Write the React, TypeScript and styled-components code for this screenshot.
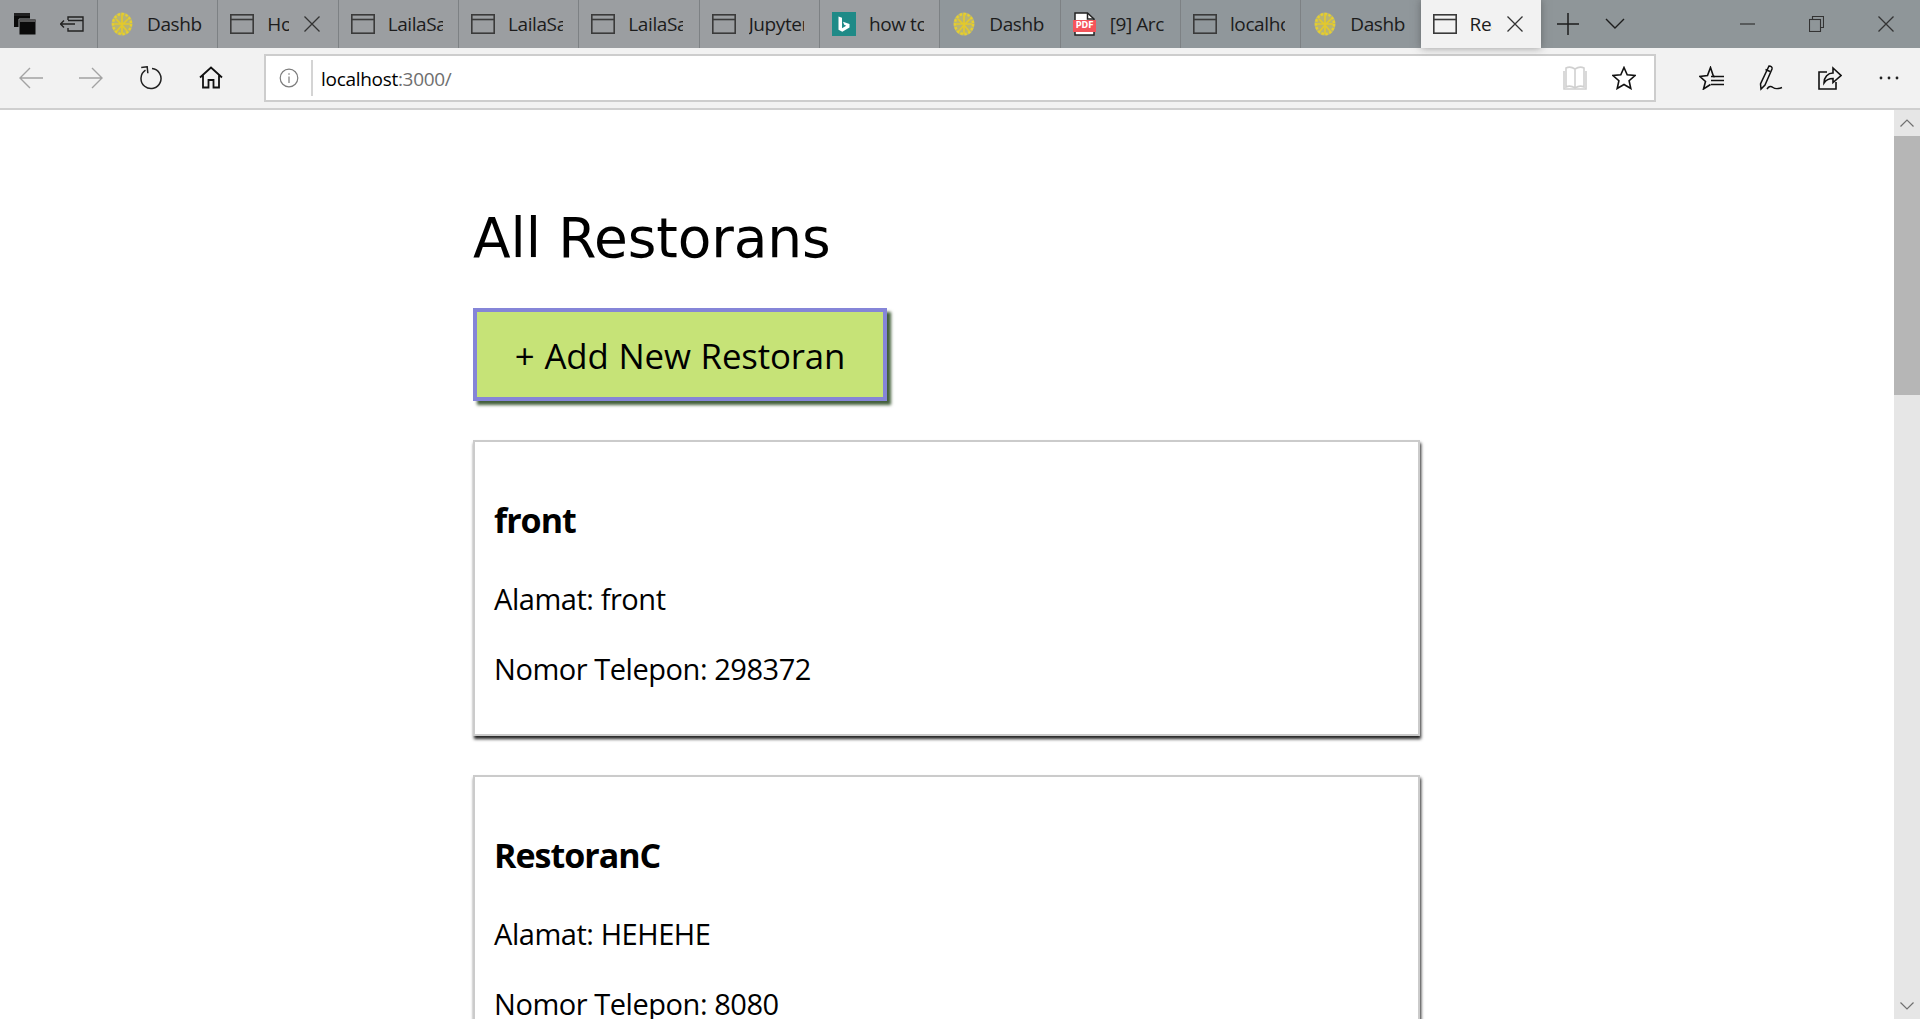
import React from 'react';
import styled, { createGlobalStyle } from 'styled-components';

const GlobalStyle = createGlobalStyle`
  html, body {
    margin: 0;
    padding: 0;
    height: 100%;
    overflow: hidden;
    background: #fff;
    font-family: 'Open Sans', 'Noto Sans', sans-serif;
    color: #000;
  }
  * { box-sizing: border-box; }
`;

type TabIcon = 'page' | 'brain' | 'bing' | 'pdf';
type TabInfo = { title: string; icon: TabIcon; closable?: boolean; active?: boolean; cool?: boolean };

const tabs: TabInfo[] = [
  { title: 'Dashboard', icon: 'brain' },
  { title: 'Home', icon: 'page', closable: true },
  { title: 'LailaSalsabila', icon: 'page' },
  { title: 'LailaSalsabila', icon: 'page' },
  { title: 'LailaSalsabila', icon: 'page' },
  { title: 'Jupyter', icon: 'page' },
  { title: 'how to', icon: 'bing' },
  { title: 'Dashb', icon: 'brain', cool: true },
  { title: '[9] Arc', icon: 'pdf', cool: true },
  { title: 'localhost', icon: 'page', cool: true },
  { title: 'Dashboard', icon: 'brain', cool: true },
  { title: 'React', icon: 'page', closable: true, active: true },
];

const restorans = [
  { name: 'front', alamat: 'front', telepon: '298372' },
  { name: 'RestoranC', alamat: 'HEHEHE', telepon: '8080' },
];

const Shell = styled.div`
  width: 1920px;
  height: 1019px;
  display: flex;
  flex-direction: column;
  overflow: hidden;
`;

const TabStrip = styled.div`
  height: 48px;
  flex: none;
  display: flex;
  background: #8f9699;
`;

const StripTools = styled.div`
  width: 97px;
  flex: none;
  display: flex;
  align-items: center;
  padding-left: 14px;
  gap: 24px;
  background: #999c9f;
`;

const Tab = styled.div<{ $active?: boolean; $cool?: boolean }>`
  flex: 0 0 120.33px;
  height: 48px;
  display: flex;
  align-items: center;
  padding-left: 12px;
  background: ${p => (p.$active ? '#f2f2f2' : p.$cool ? '#90979b' : '#9b9ea1')};
  border-left: ${p => (p.$active ? 'none' : '1px solid #7d8184')};
  box-shadow: ${p => (p.$active ? '0 0 8px rgba(60, 60, 60, 0.5)' : 'none')};
  position: relative;
`;

const TabGlyph = styled.span`
  flex: none;
  width: 24px;
  height: 30px;
  display: flex;
  align-items: center;
  justify-content: center;
`;

const TabTitle = styled.span<{ $closable?: boolean }>`
  margin-left: 13px;
  width: ${p => (p.$closable ? '22px' : '55px')};
  overflow: hidden;
  white-space: nowrap;
  font-size: 19px;
  letter-spacing: -0.4px;
  color: #1c1c1c;
`;

const TabClose = styled.span`
  margin-left: 15px;
  display: flex;
`;

const StripButton = styled.div<{ $width: number }>`
  flex: none;
  width: ${p => p.$width}px;
  height: 48px;
  display: flex;
  align-items: center;
  justify-content: center;
`;

const WindowButtons = styled.div`
  margin-left: auto;
  display: flex;
`;

const Toolbar = styled.div`
  height: 62px;
  flex: none;
  display: flex;
  align-items: center;
  background: #f2f2f2;
  border-bottom: 2px solid #cfcfcf;
  padding: 0 2px 0 1px;
`;

const ToolButton = styled.div`
  flex: none;
  width: 60px;
  height: 48px;
  display: flex;
  align-items: center;
  justify-content: center;
`;

const ActionButton = styled(ToolButton)`
  width: 59px;
`;

const AddressBar = styled.div`
  width: 1393px;
  height: 48px;
  margin: 0 26px 0 23px;
  display: flex;
  align-items: center;
  background: #fff;
  border: 2px solid #cdcdcd;
`;

const InfoSlot = styled.div`
  width: 47px;
  height: 36px;
  flex: none;
  display: flex;
  align-items: center;
  justify-content: center;
  border-right: 2px solid #d4d4d4;
`;

const Url = styled.div`
  margin-left: 8px;
  padding-top: 1px;
  font-size: 19px;
  letter-spacing: -0.3px;
  color: #000;
`;

const UrlRest = styled.span`
  color: #6f6f6f;
`;

const AddressActions = styled.div`
  margin-left: auto;
  display: flex;
  padding-right: 6px;
`;

const AddressAction = styled.div`
  width: 49px;
  height: 44px;
  display: flex;
  align-items: center;
  justify-content: center;
`;

const Viewport = styled.div`
  flex: 1;
  display: flex;
  min-height: 0;
`;

const PageArea = styled.main`
  flex: 1;
  overflow: hidden;
  padding: 94px 0 0 473px;
`;

const Column = styled.div`
  width: 947px;
`;

const Heading = styled.h1`
  margin: 0 0 36px;
  height: 68px;
  font-family: 'DejaVu Sans', sans-serif;
  font-size: 55px;
  font-weight: 400;
  line-height: 68px;
  letter-spacing: -0.1px;
`;

const AddButton = styled.button`
  display: block;
  width: 414px;
  height: 93px;
  margin: 0 0 39px;
  padding: 2px 0 0;
  background: #c6e377;
  border: 4px solid #8585d8;
  box-shadow: 4px 4px 3px #44603c;
  font-family: 'Open Sans', sans-serif;
  font-size: 34.8px;
  letter-spacing: -0.15px;
  word-spacing: 1px;
  color: #000;
`;

const Card = styled.article`
  height: 296px;
  margin-bottom: 39px;
  padding: 58px 20px 0 19px;
  background: #fff;
  border: 2px solid #cbcbcb;
  box-shadow: 1px 3px 3px #222;
`;

const CardName = styled.h3`
  margin: 0 0 39px;
  font-family: 'Open Sans', sans-serif;
  font-size: 34px;
  font-weight: 700;
  line-height: 40px;
  letter-spacing: -1px;
`;

const CardLine = styled.p`
  margin: 0 0 30px;
  font-family: 'Open Sans', sans-serif;
  font-size: 29px;
  line-height: 40px;
  letter-spacing: -0.45px;
`;

const Scrollbar = styled.div`
  width: 26px;
  flex: none;
  display: flex;
  flex-direction: column;
  background: #e6e6e6;
`;

const ScrollArrow = styled.div`
  height: 26px;
  flex: none;
  display: flex;
  align-items: center;
  justify-content: center;
`;

const ScrollThumb = styled.div`
  height: 259px;
  flex: none;
  background: #b6b6b6;
`;

const ScrollTrack = styled.div`
  flex: 1;
`;

const PdfGlyph = styled.span`
  position: relative;
  display: block;
  width: 23px;
  height: 24px;
`;

const PdfLabel = styled.span`
  position: absolute;
  left: 0;
  top: 8px;
  width: 23px;
  height: 12px;
  background: #f4545a;
  color: #fff;
  font-family: 'DejaVu Sans', sans-serif;
  font-size: 8px;
  font-weight: 700;
  line-height: 12px;
  text-align: center;
`;

const PageIcon = () => (
  <svg width="24" height="24" viewBox="0 0 24 24" fill="none" stroke="#3a3a3a" strokeWidth="1.6">
    <rect x="0.8" y="2.8" width="22.4" height="18.4" />
    <path d="M1 7.5h22" />
  </svg>
);

const BrainIcon = () => (
  <svg width="22" height="24" viewBox="0 0 22 24" fill="none">
    <ellipse cx="11" cy="12" rx="10.5" ry="11.5" fill="#b9b472" />
    <ellipse cx="11" cy="12" rx="9" ry="10" stroke="#e6cf2e" strokeWidth="2.4" strokeDasharray="2.5 1.5" />
    <path d="M11 2v20M5 7l6 6 6-6M6 19l5-6 5 6M3 12h16" stroke="#e3c92c" strokeWidth="1.7" />
  </svg>
);

const BingIcon = () => (
  <svg width="24" height="24" viewBox="0 0 24 24">
    <rect width="24" height="24" fill="#1f8a87" />
    <path d="M6.5 4.5l3.5 1.2v10.5l4.2-2.4-2-1-1.2-3 6.5 2.3v3.4l-7.2 4.3-3.8-2z" fill="#fff" />
  </svg>
);

const PdfIcon = () => (
  <PdfGlyph>
    <svg width="23" height="24" viewBox="0 0 23 24" fill="#fff" stroke="#222" strokeWidth="1.5">
      <path d="M2 1h12.5L21 7v16H2z" />
      <path d="M14.5 1v6H21" fill="none" />
    </svg>
    <PdfLabel>PDF</PdfLabel>
  </PdfGlyph>
);

const CloseIcon = () => (
  <svg width="16" height="16" viewBox="0 0 16 16" stroke="#333" strokeWidth="1.3" fill="none">
    <path d="M0.5 0.5l15 15M15.5 0.5l-15 15" />
  </svg>
);

const tabGlyph = (icon: TabIcon) => {
  if (icon === 'brain') return <BrainIcon />;
  if (icon === 'bing') return <BingIcon />;
  if (icon === 'pdf') return <PdfIcon />;
  return <PageIcon />;
};

const Arrow = ({ flip }: { flip?: boolean }) => (
  <svg width="24" height="24" viewBox="0 0 24 24" fill="none" stroke="#a3a3a3" strokeWidth="1.4">
    {flip ? <path d="M0 12h23M13 2l10 10-10 10" /> : <path d="M24 12H1M11 2L1 12l10 10" />}
  </svg>
);

export default function App() {
  return (
    <Shell>
      <GlobalStyle />
      <TabStrip>
        <StripTools>
          <svg width="22" height="22" viewBox="0 0 22 22" fill="#0a0a0a">
            <path d="M0 0h16v3H0z" opacity="0.85" />
            <path d="M0 3h16v11H0z" />
            <path d="M5 6h17v16H5z" stroke="#999c9f" strokeWidth="1" />
            <path d="M5.5 6.5h16v2.5h-16z" fill="#555" />
          </svg>
          <svg width="24" height="16" viewBox="0 0 24 16" fill="none" stroke="#222" strokeWidth="1.4">
            <path d="M8 4V1h15v14H8v-3M8 4.5h15" />
            <path d="M0.5 8H15M4 4.5L0.5 8 4 11.5" />
          </svg>
        </StripTools>
        {tabs.map((tab, i) => (
          <Tab key={i} $active={tab.active} $cool={tab.cool}>
            <TabGlyph>{tabGlyph(tab.icon)}</TabGlyph>
            <TabTitle $closable={tab.closable}>{tab.title}</TabTitle>
            {tab.closable && (
              <TabClose>
                <CloseIcon />
              </TabClose>
            )}
          </Tab>
        ))}
        <StripButton $width={54}>
          <svg width="22" height="22" viewBox="0 0 22 22" stroke="#1d1d1d" strokeWidth="1.5">
            <path d="M11 0v22M0 11h22" />
          </svg>
        </StripButton>
        <StripButton $width={40}>
          <svg width="20" height="12" viewBox="0 0 20 12" fill="none" stroke="#1d1d1d" strokeWidth="1.4">
            <path d="M1 1l9 9 9-9" />
          </svg>
        </StripButton>
        <WindowButtons>
          <StripButton $width={69}>
            <svg width="15" height="2" viewBox="0 0 15 2" stroke="#333" strokeWidth="1.2">
              <path d="M0 1h15" />
            </svg>
          </StripButton>
          <StripButton $width={69}>
            <svg width="15" height="16" viewBox="0 0 15 16" fill="none" stroke="#333" strokeWidth="1.1">
              <rect x="0.5" y="3.5" width="11" height="12" />
              <path d="M3.5 3.5v-3h11v11h-3" />
            </svg>
          </StripButton>
          <StripButton $width={69}>
            <CloseIcon />
          </StripButton>
        </WindowButtons>
      </TabStrip>

      <Toolbar>
        <ToolButton>
          <Arrow />
        </ToolButton>
        <ToolButton>
          <Arrow flip />
        </ToolButton>
        <ToolButton>
          <svg width="24" height="24" viewBox="0 0 24 24" fill="none" stroke="#222" strokeWidth="1.5">
            <path d="M6.5 4.2A10 10 0 1 0 13 2.6" />
            <path d="M2.5 1h6v6.5" transform="rotate(-6 6 4)" />
          </svg>
        </ToolButton>
        <ToolButton>
          <svg width="24" height="24" viewBox="0 0 24 24" fill="none" stroke="#111" strokeWidth="1.8">
            <path d="M1 11.5L12 1.5l11 10M4 9.5V21.5h5.5V14h5v7.5H20V9.5" />
          </svg>
        </ToolButton>
        <AddressBar>
          <InfoSlot>
            <svg width="20" height="20" viewBox="0 0 20 20" fill="none" stroke="#7c7c7c" strokeWidth="1.2">
              <circle cx="10" cy="10" r="8.8" />
              <path d="M10 8.5V15M10 5.2v1.6" />
            </svg>
          </InfoSlot>
          <Url>
            localhost<UrlRest>:3000/</UrlRest>
          </Url>
          <AddressActions>
            <AddressAction>
              <svg width="24" height="26" viewBox="0 0 24 26" fill="none" stroke="#d0d0d0" strokeWidth="1.6">
                <path d="M12 4C9 2 5 2 3 3v19c2-1 6-1 9 1 3-2 7-2 9-1V3c-2-1-6-1-9 1zM12 4v19" />
                <path d="M1 6v18h22V6" />
              </svg>
            </AddressAction>
            <AddressAction>
              <svg width="24" height="24" viewBox="0 0 24 24" fill="none" stroke="#111" strokeWidth="1.6">
                <path d="M12 1.5l3.2 7.2 7.8.8-5.9 5.2 1.7 7.8L12 18.5l-6.8 4 1.7-7.8L1 9.5l7.8-.8z" />
              </svg>
            </AddressAction>
          </AddressActions>
        </AddressBar>
        <ActionButton>
          <svg width="25" height="24" viewBox="0 0 25 24" fill="none" stroke="#111" strokeWidth="1.6">
            <path d="M16 10.5h-1.500L11.500 1.500 8.500 9.500 1 10.500l5.500 5L4.500 23l7-4.500" />
            <path d="M12 10.500h13M12 14.500h13M12 18.500h13" />
          </svg>
        </ActionButton>
        <ActionButton>
          <svg width="24" height="26" viewBox="0 0 24 26" fill="none" stroke="#111" strokeWidth="1.5">
            <path d="M10 1c2 0 3.500 1 3 3L6 20l-4 4-.5-5z" />
            <path d="M6.500 4.500l4.500 2" />
            <path d="M8 24c2-3 4-3 6-1.500s5 1.500 9 0" />
          </svg>
        </ActionButton>
        <ActionButton>
          <svg width="24" height="24" viewBox="0 0 24 24" fill="none" stroke="#111" strokeWidth="1.6">
            <path d="M9 6H1v17h17v-7" />
            <path d="M6 17c0-6 4-10 9-10V2l8 7.500-8 7V12.500c-4 0-7 1.500-9 4.500z" />
          </svg>
        </ActionButton>
        <ActionButton>
          <svg width="20" height="4" viewBox="0 0 20 4" fill="#222">
            <circle cx="2" cy="2" r="1.4" />
            <circle cx="10" cy="2" r="1.4" />
            <circle cx="18" cy="2" r="1.4" />
          </svg>
        </ActionButton>
      </Toolbar>

      <Viewport>
        <PageArea>
          <Column>
            <Heading>All Restorans</Heading>
            <AddButton>+ Add New Restoran</AddButton>
            {restorans.map(r => (
              <Card key={r.name}>
                <CardName>{r.name}</CardName>
                <CardLine>Alamat: {r.alamat}</CardLine>
                <CardLine>Nomor Telepon: {r.telepon}</CardLine>
              </Card>
            ))}
          </Column>
        </PageArea>
        <Scrollbar>
          <ScrollArrow>
            <svg width="14" height="8" viewBox="0 0 14 8" fill="none" stroke="#707070" strokeWidth="1.2">
              <path d="M0.5 7.500L7 1l6.500 6.500" />
            </svg>
          </ScrollArrow>
          <ScrollThumb />
          <ScrollTrack />
          <ScrollArrow>
            <svg width="14" height="8" viewBox="0 0 14 8" fill="none" stroke="#707070" strokeWidth="1.2">
              <path d="M0.5 0.500L7 7l6.500-6.500" />
            </svg>
          </ScrollArrow>
        </Scrollbar>
      </Viewport>
    </Shell>
  );
}
